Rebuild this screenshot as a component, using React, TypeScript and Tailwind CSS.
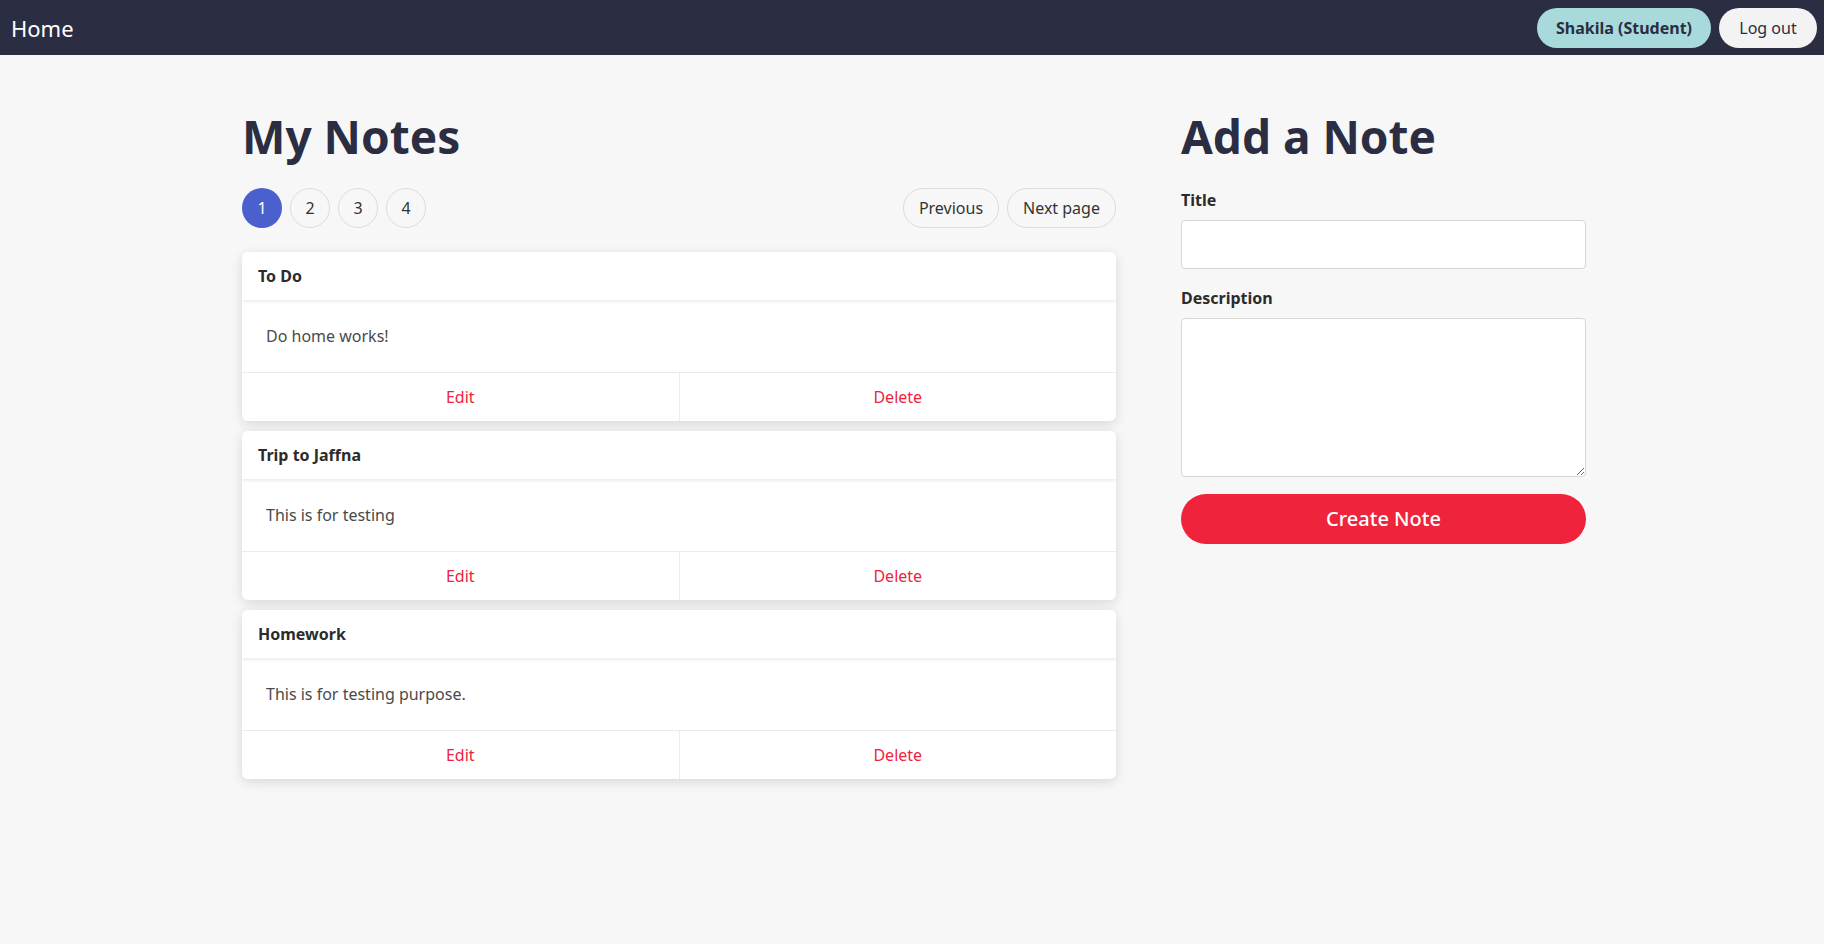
import { useState } from 'react';

type Note = { id: number; title: string; description: string };

const notes: Note[] = [
  { id: 1, title: 'To Do', description: 'Do home works!' },
  { id: 2, title: 'Trip to Jaffna', description: 'This is for testing' },
  { id: 3, title: 'Homework', description: 'This is for testing purpose.' },
];

// ─────────────────────────────────────────────────────────────────
// Top bar
// ─────────────────────────────────────────────────────────────────
function NavBar() {
  return (
    <header className="h-[55px] bg-[#2b2d42] flex items-center justify-between pl-[11px] pr-[7px]">
      <a className="text-white text-[22px] leading-none">Home</a>
      <div className="flex items-center gap-2">
        <span className="h-10 w-[174px] rounded-full bg-[#a8dadc] text-[#2b2d42] font-bold text-[16px] flex items-center justify-center">
          Shakila (Student)
        </span>
        <button className="h-10 w-[98px] rounded-full bg-[#f3f3f3] text-[#2b2d42] text-[16px] flex items-center justify-center">
          Log out
        </button>
      </div>
    </header>
  );
}

// ─────────────────────────────────────────────────────────────────
// Note card
// ─────────────────────────────────────────────────────────────────
function NoteCard({ note }: { note: Note }) {
  return (
    <div className="bg-white rounded-md overflow-hidden shadow-[0_3px_12px_rgba(0,0,0,0.13)]">
      <div className="relative z-10 h-12 flex items-center px-4 font-bold text-[16px] text-[#2b2b2b] bg-white shadow-[0_2px_3px_rgba(0,0,0,0.08)]">
        {note.title}
      </div>
      <div className="h-[72px] flex items-center px-6 text-[16px] text-[#4a4a4a]">{note.description}</div>
      <div className="flex h-[49px] border-t border-[#ebebeb]">
        <button className="flex-1 text-[#ef233c] text-[16px]">Edit</button>
        <button className="flex-1 border-l border-[#ebebeb] text-[#ef233c] text-[16px]">Delete</button>
      </div>
    </div>
  );
}

export default function App() {
  const [page, setPage] = useState(1);

  return (
    <div className="min-h-screen bg-[#f7f7f7] font-['Noto_Sans',sans-serif]">
      <NavBar />

      <main className="w-[1348px] mx-auto pl-1 pt-[53px] flex justify-between">
        {/* Notes list */}
        <section className="w-[874px]">
          <h1 className="text-[46px] leading-[56px] font-bold text-[#2b2d42] mb-[24px]">My Notes</h1>

          <div className="flex items-center justify-between">
            <div className="flex gap-2">
              {[1, 2, 3, 4].map((n) => (
                <button
                  key={n}
                  onClick={() => setPage(n)}
                  className={
                    n === page
                      ? 'w-10 h-10 rounded-full bg-[#4a60cc] text-white text-[16px] flex items-center justify-center'
                      : 'w-10 h-10 rounded-full border border-[#dcdcdc] text-[#333] text-[16px] flex items-center justify-center'
                  }
                >
                  {n}
                </button>
              ))}
            </div>
            <div className="flex gap-2">
              <button className="h-10 w-[96px] rounded-full border border-[#dcdcdc] text-[#333] text-[16px]">Previous</button>
              <button className="h-10 w-[109px] rounded-full border border-[#dcdcdc] text-[#333] text-[16px]">Next page</button>
            </div>
          </div>

          <div className="mt-6 flex flex-col gap-[10px]">
            {notes.map((note) => (
              <NoteCard key={note.id} note={note} />
            ))}
          </div>
        </section>

        {/* Add note form */}
        <section className="w-[405px]">
          <h1 className="text-[46px] leading-[56px] font-bold text-[#2b2d42] mb-[24px]">Add a Note</h1>

          <label className="block font-bold text-[16px] leading-6 text-[#2b2b2b] mb-2">Title</label>
          <input className="block w-full h-[49px] bg-white border border-[#d6d6d6] rounded-[4px] px-3 outline-none" />

          <label className="block font-bold text-[16px] leading-6 text-[#2b2b2b] mt-[17px] mb-2">Description</label>
          <textarea className="block w-full h-[159px] bg-white border border-[#d6d6d6] rounded-[4px] px-3 py-2 outline-none" />

          <button className="mt-[17px] w-full h-[50px] rounded-full bg-[#ef233c] text-white text-[20px] font-medium">
            Create Note
          </button>
        </section>
      </main>
    </div>
  );
}
